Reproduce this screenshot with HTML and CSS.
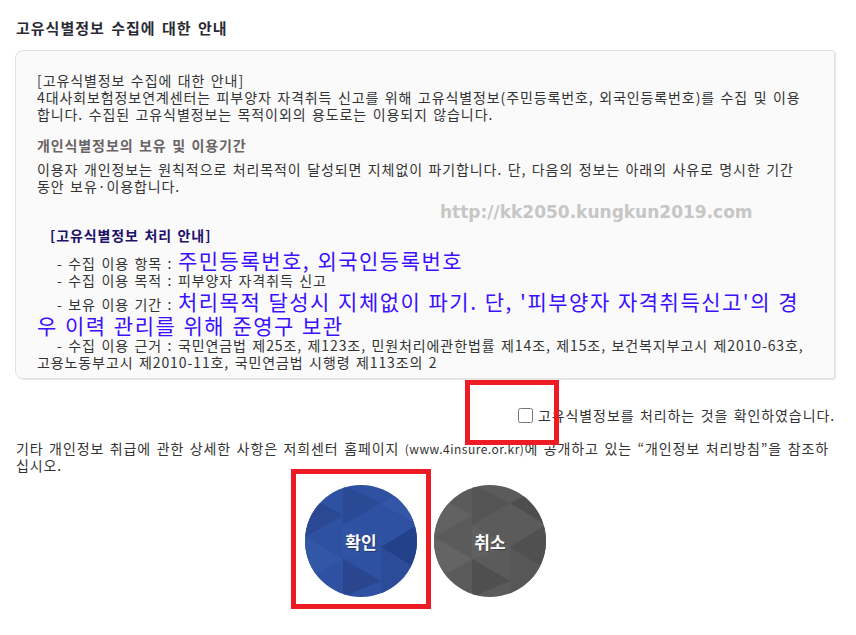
FILE: index.html
```
<!DOCTYPE html>
<html>
<head>
    <link rel="stylesheet" href="styles.css">
</head>
<body>
    <div class="wrap">
        <h3 class="title">고유식별정보 수집에 대한 안내</h3>

        <!-- notice box -->
        <div class="notice_box">
            <p>[고유식별정보 수집에 대한 안내]<br>4대사회보험정보연계센터는 피부양자 자격취득 신고를 위해 고유식별정보(주민등록번호, 외국인등록번호)를 수집 및 이용합니다. 수집된 고유식별정보는 목적이외의 용도로는 이용되지 않습니다.</p>
            <h4 class="sub_title">개인식별정보의 보유 및 이용기간</h4>
            <p>이용자 개인정보는 원칙적으로 처리목적이 달성되면 지체없이 파기합니다. 단, 다음의 정보는 아래의 사유로 명시한 기간 동안 보유·이용합니다.</p>

            <span class="watermark">http://kk2050.kungkun2019.com</span>

            <div class="detail">
                <p class="detail_title">[고유식별정보 처리 안내]</p>
                <p class="item">- 수집 이용 항목 : <span class="em">주민등록번호, 외국인등록번호</span></p>
                <p class="item">- 수집 이용 목적 : 피부양자 자격취득 신고</p>
                <p class="item">- 보유 이용 기간 : <span class="em">처리목적 달성시 지체없이 파기. 단, '피부양자 자격취득신고'의 경우 이력 관리를 위해 준영구 보관</span></p>
                <p class="item">- 수집 이용 근거 : 국민연금법 제25조, 제123조, 민원처리에관한법률 제14조, 제15조, 보건복지부고시 제2010-63호, 고용노동부고시 제2010-11호, 국민연금법 시행령 제113조의 2</p>
            </div>
        </div>

        <div class="agree_row">
            <label><input type="checkbox" class="agree_check">고유식별정보를 처리하는 것을 확인하였습니다.</label>
        </div>

        <p class="etc">기타 개인정보 취급에 관한 상세한 사항은 저희센터 홈페이지 <span class="url">(www.4insure.or.kr)</span>에 공개하고 있는 “개인정보 처리방침”을 참조하십시오.</p>

        <div class="btn_group">
            <button class="round_btn btn_ok">
                <svg class="pattern" viewBox="0 0 112 112">
                    <rect width="112" height="112" fill="#2f51a1"/>
                    <polygon points="0,10 38,30 0,52" fill="#2a4893"/>
                    <polygon points="38,0 76,18 38,40" fill="#2b4a96"/>
                    <polygon points="76,18 112,0 112,40" fill="#3356a6"/>
                    <polygon points="112,40 76,62 112,84" fill="#23408a"/>
                    <polygon points="0,52 38,74 0,96" fill="#3357a7"/>
                    <polygon points="38,74 76,96 38,112" fill="#29468f"/>
                    <polygon points="76,62 112,84 76,112" fill="#2c4b98"/>
                    <polygon points="38,40 76,62 38,74" fill="#3154a3"/>
                </svg>
                <span class="btn_text">확인</span>
            </button>
            <button class="round_btn btn_cancel">
                <svg class="pattern" viewBox="0 0 112 112">
                    <rect width="112" height="112" fill="#5b5b5b"/>
                    <polygon points="0,10 38,30 0,52" fill="#626262"/>
                    <polygon points="38,0 76,18 38,40" fill="#545454"/>
                    <polygon points="76,18 112,0 112,40" fill="#4e4e4e"/>
                    <polygon points="112,40 76,62 112,84" fill="#505050"/>
                    <polygon points="0,52 38,74 0,96" fill="#646464"/>
                    <polygon points="38,74 76,96 38,112" fill="#4f4f4f"/>
                    <polygon points="76,62 112,84 76,112" fill="#575757"/>
                    <polygon points="38,40 76,62 38,74" fill="#606060"/>
                </svg>
                <span class="btn_text">취소</span>
            </button>
        </div>
    </div>

    <!-- red marks -->
    <div class="red_mark mark_agree"></div>
    <div class="red_mark mark_ok"></div>
</body>
</html>
```

FILE: styles.css
```
body {
    margin: 0;
    background-color: #fff;
    font-family: "Noto Sans CJK KR", "Liberation Sans", sans-serif;
    font-size: 14px;
    letter-spacing: 0.9px;
    word-spacing: 1.5px;
    color: #333;
}

.wrap {
    width: 820px;
    margin-left: 15px;
    padding-top: 18px;
}

.title {
    margin: 0 0 12px 1px;
    font-size: 15px;
    line-height: 20px;
    font-weight: bold;
    letter-spacing: 1px;
    word-spacing: 2px;
    color: #2a2a35;
}

/* notice box */
.notice_box {
    position: relative;
    background-color: #fafafa;
    border: 1px solid #e2e2e2;
    border-radius: 8px 3px 3px 8px;
    box-shadow: 1px 1px 1px #e6e6e6;
    padding: 21px 22px 7px 21px;
}

.notice_box p {
    margin: 0;
    line-height: 17px;
}

.sub_title {
    margin: 14px 0 7px 0;
    font-size: 14px;
    line-height: 17px;
    font-weight: bold;
    color: #6a6466;
}

.watermark {
    position: absolute;
    left: 424px;
    top: 151px;
    font-family: "DejaVu Sans", sans-serif;
    font-size: 17px;
    font-weight: bold;
    letter-spacing: 0;
    word-spacing: 0;
    color: #c6c6c6;
}

.detail {
    margin-top: 32px;
}

.notice_box .detail_title {
    margin: 0 0 4px 13px;
    font-weight: bold;
    color: #1e0f6a;
}

.notice_box .item {
    text-indent: 20px;
    line-height: 17px;
}

.em {
    font-size: 21px;
    line-height: 24px;
    letter-spacing: 1.5px;
    word-spacing: 1px;
    color: #3a10ff;
}

/* agree */
.agree_row {
    display: flex;
    justify-content: flex-end;
    margin-top: 26px;
    line-height: 20px;
}

.agree_row label {
    display: flex;
    align-items: center;
}

.agree_check {
    width: 15px;
    height: 15px;
    margin: 0 5px 0 0;
}

.etc {
    margin: 15px 0 0 1px;
    line-height: 17px;
}

.url {
    font-size: 12px;
    letter-spacing: 0.5px;
}

/* buttons */
.btn_group {
    display: flex;
    justify-content: center;
    gap: 17px;
    margin-top: 11px;
    padding-left: 1px;
}

.round_btn {
    position: relative;
    width: 112px;
    height: 112px;
    padding: 0;
    border: none;
    border-radius: 50%;
    overflow: hidden;
    display: flex;
    justify-content: center;
    align-items: center;
    cursor: pointer;
    background: none;
}

.pattern {
    position: absolute;
    left: 0;
    top: 0;
    width: 100%;
    height: 100%;
}

.btn_text {
    position: relative;
    font-family: "Noto Sans CJK KR", sans-serif;
    font-size: 17px;
    font-weight: bold;
    letter-spacing: 0;
    color: #fff;
    text-shadow: 1px 1px 1px rgba(0, 0, 0, 0.35);
}

.red_mark {
    position: absolute;
    box-sizing: border-box;
    border: 5px solid #ed1c24;
}

.mark_agree {
    left: 465px;
    top: 380px;
    width: 94px;
    height: 65px;
}

.mark_ok {
    left: 291px;
    top: 469px;
    width: 140px;
    height: 140px;
}
```
